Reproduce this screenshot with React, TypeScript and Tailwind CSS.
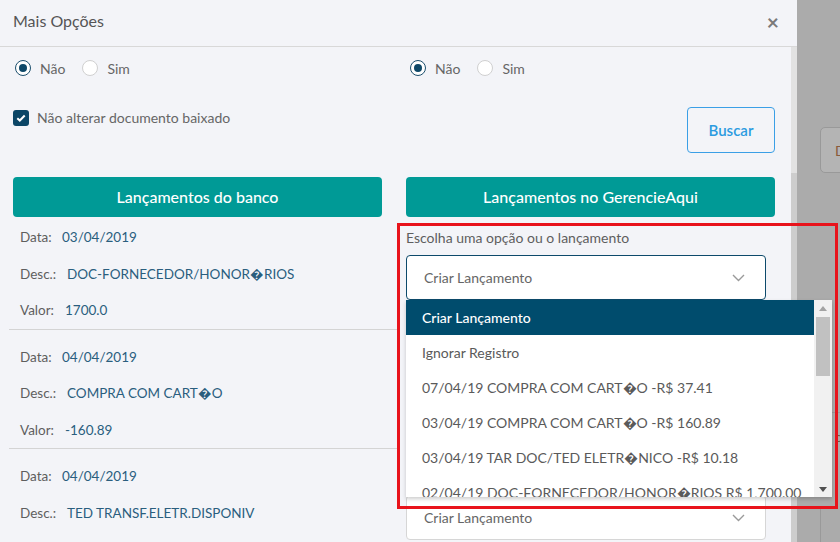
import React from "react";

type Entry = { data: string; desc: string; valor: string };

const entries: Entry[] = [
  { data: "03/04/2019", desc: "DOC-FORNECEDOR/HONOR\uFFFDRIOS", valor: "1700.0" },
  { data: "04/04/2019", desc: "COMPRA COM CART\uFFFDO", valor: "-160.89" },
  { data: "04/04/2019", desc: "TED TRANSF.ELETR.DISPONIV", valor: "-1200.0" },
];

const options = [
  "Criar Lançamento",
  "Ignorar Registro",
  "07/04/19 COMPRA COM CART\uFFFDO -R$ 37.41",
  "03/04/19 COMPRA COM CART\uFFFDO -R$ 160.89",
  "03/04/19 TAR DOC/TED ELETR\uFFFDNICO -R$ 10.18",
  "02/04/19 DOC-FORNECEDOR/HONOR\uFFFDRIOS R$ 1,700.00",
];

function Radio({ checked, label }: { checked?: boolean; label: string }) {
  return (
    <label className="flex items-center gap-[9px]">
      <span
        className={
          checked
            ? "w-4 h-4 rounded-full border-[1.5px] border-[#1c4f6d] bg-white flex items-center justify-center"
            : "w-4 h-4 rounded-full border border-[#d0d0d0] bg-white"
        }
      >
        {checked && <span className="w-2 h-2 rounded-full bg-[#0e4868]" />}
      </span>
      <span className="text-[14px] text-[#666]">{label}</span>
    </label>
  );
}

function Chevron() {
  return (
    <svg width="13" height="8" viewBox="0 0 13 8" className="text-[#9a9a9a]">
      <polyline points="1,1 6.5,6.5 12,1" fill="none" stroke="currentColor" strokeWidth="1.4" />
    </svg>
  );
}

function SelectBox({ focused }: { focused?: boolean }) {
  return (
    <div
      className={
        "h-[45px] w-[360px] bg-white rounded-[4px] flex items-center justify-between pl-[17px] pr-[20px] " +
        (focused ? "border border-[#0d4a6b]" : "border border-[#d6d6d6]")
      }
    >
      <span className="text-[14px] text-[#666]">Criar Lançamento</span>
      <Chevron />
    </div>
  );
}

export default function App() {
  return (
    <div className="relative w-[840px] h-[542px] overflow-hidden flex font-['Lato',sans-serif]">
      {/* modal */}
      <div className="w-[797px] h-full bg-[#f3f4f8] flex flex-col">
        <div className="h-[47px] shrink-0 border-b border-[#d8d8d8] flex items-center justify-between pl-[13px] pr-[18px] pb-[4px]">
          <span className="text-[16px] text-[#555]">Mais Opções</span>
          <span className="text-[21px] font-bold text-[#7a7a7a] leading-none">×</span>
        </div>
        <div className="flex flex-1 min-h-0">
          <div className="flex-1 pl-[13px] pr-[16px] overflow-hidden">
            <div className="grid grid-cols-[369px_369px] gap-x-[24px]">
              {/* radios */}
              <div className="h-[42px] flex items-center gap-[17px] pl-[2px]">
                <Radio checked label="Não" />
                <Radio label="Sim" />
              </div>
              <div className="h-[42px] flex items-center gap-[17px] pl-[4px]">
                <Radio checked label="Não" />
                <Radio label="Sim" />
              </div>
              {/* checkbox / buscar */}
              <div className="h-[88px] pt-[18px]">
                <label className="flex items-center gap-[8px]">
                  <span className="w-4 h-4 rounded-[3px] bg-[#0b4666] flex items-center justify-center">
                    <svg width="10" height="8" viewBox="0 0 10 8">
                      <polyline points="1.3,4.2 3.8,6.5 8.7,1.5" fill="none" stroke="white" strokeWidth="2" />
                    </svg>
                  </span>
                  <span className="text-[14px] text-[#666]">Não alterar documento baixado</span>
                </label>
              </div>
              <div className="h-[88px] pt-[18px] flex justify-end">
                <button className="w-[88px] h-[46px] border border-[#3a9fe6] rounded-[4px] text-[15px] font-semibold text-[#2b9be0] bg-transparent">
                  Buscar
                </button>
              </div>
              {/* teal headers */}
              <button className="h-[40px] rounded-[4px] bg-[#009a96] text-white text-[16px] font-medium">
                Lançamentos do banco
              </button>
              <button className="h-[40px] rounded-[4px] bg-[#009a96] text-white text-[16px] font-medium">
                Lançamentos no GerencieAqui
              </button>
              {/* left list */}
              <div>
                {entries.map((e, i) => (
                  <div key={i} className={i === 0 ? "pt-[2px]" : "pt-[9px]"}>
                    <div className="pl-[7px]">
                      <div className="h-[36.5px] flex items-center text-[13.5px]">
                        <span className="text-[#5e5e5e] w-[42px]">Data:</span>
                        <span className="text-[#2a5e7e]">{e.data}</span>
                      </div>
                      <div className="h-[36.5px] flex items-center text-[13.5px]">
                        <span className="text-[#5e5e5e] w-[47px]">Desc.:</span>
                        <span className="text-[#2a5e7e]">{e.desc}</span>
                      </div>
                      <div className="h-[36.5px] flex items-center text-[13.5px]">
                        <span className="text-[#5e5e5e] w-[45px]">Valor:</span>
                        <span className="text-[#2a5e7e]">{e.valor}</span>
                      </div>
                    </div>
                    <div className="-ml-[4px] w-[388px] border-b border-[#d4d4d4]" />
                  </div>
                ))}
              </div>
              {/* right list */}
              <div>
                {[0, 1, 2].map((i) => (
                  <div key={i} className="h-[120px] pt-[10px]">
                    <div className="h-[20px] flex items-center text-[14px] text-[#5e5e5e]">
                      Escolha uma opção ou o lançamento
                    </div>
                    <div className="mt-[8px]">
                      <SelectBox focused={i === 0} />
                    </div>
                  </div>
                ))}
              </div>
            </div>
          </div>
          {/* modal scrollbar */}
          <div className="w-[6px] bg-[#e2e2e2] flex flex-col">
            <div className="h-[126px]" />
            <div className="flex-1 bg-[#cdcdcd]" />
          </div>
        </div>
      </div>
      {/* backdrop */}
      <div className="flex-1 bg-[#ababab] relative">
        <div className="absolute left-[23px] top-[127px] w-[40px] h-[46px] rounded-[5px] border border-[#999] bg-[#b4b4b4] flex items-center pl-[14px]">
          <span className="text-[14px] text-[#8a5a3a]">D</span>
        </div>
        <div className="absolute left-0 top-[412px] w-full border-b border-[#9a9a9a]" />
        <div className="absolute left-[38px] top-[428px] text-[13px] text-[#6b5a40]">ct</div>
        <div className="absolute left-[23px] top-[506px] w-[1px] h-[40px] bg-[#999]" />
      </div>

      {/* open dropdown */}
      <div className="absolute left-[406px] top-[300px] w-[426px] h-[197px] bg-white shadow-[0_2px_4px_rgba(0,0,0,0.2)] flex overflow-hidden">
        <div className="flex-1">
          {options.map((o, i) => (
            <div
              key={i}
              className={
                "h-[35px] flex items-center pl-[16px] text-[14px] whitespace-nowrap " +
                (i === 0 ? "bg-[#004c6d] text-white font-medium" : "text-[#5a5a5a]")
              }
            >
              {o}
            </div>
          ))}
        </div>
        <div className="w-[18px] bg-[#f1f1f1] flex flex-col items-center">
          <svg width="8" height="5" viewBox="0 0 8 5" className="mt-[6px]">
            <polygon points="0,5 8,5 4,0" fill="#a3a3a3" />
          </svg>
          <div className="mt-[6px] w-[14px] h-[59px] bg-[#c1c1c1]" />
          <div className="flex-1" />
          <svg width="8" height="5" viewBox="0 0 8 5" className="mb-[5px]">
            <polygon points="0,0 8,0 4,5" fill="#505050" />
          </svg>
        </div>
      </div>

      {/* highlight frame */}
      <div className="absolute left-[397px] top-[223px] w-[441px] h-[286px] border-[3px] border-[#e8131b] pointer-events-none" />
    </div>
  );
}
